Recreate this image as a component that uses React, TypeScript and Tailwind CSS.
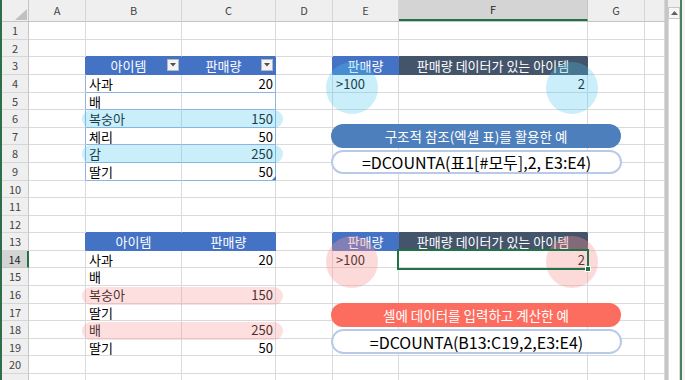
import React from "react";

type Kind = "l" | "r" | "hb" | "hs";
interface CellData {
  t: string;
  k: Kind;
  f?: boolean;
}

const COLS = [
  { k: "A", w: "w-[57px]" },
  { k: "B", w: "w-[96px]" },
  { k: "C", w: "w-[94px]" },
  { k: "D", w: "w-[57px]" },
  { k: "E", w: "w-[66px]" },
  { k: "F", w: "w-[189px]" },
  { k: "G", w: "w-[57px]" },
  { k: "H", w: "w-[20px]" },
];

// row heights for rows 1..21 (Excel rows are ~17.6px at this zoom)
const ROW_H = [
  "h-[18px]", "h-[17px]", "h-[18px]", "h-[18px]", "h-[17px]", "h-[18px]", "h-[17px]",
  "h-[18px]", "h-[18px]", "h-[17px]", "h-[18px]", "h-[17px]", "h-[18px]", "h-[17px]",
  "h-[18px]", "h-[18px]", "h-[17px]", "h-[18px]", "h-[17px]", "h-[18px]", "h-[17px]",
];

const DATA: Record<string, CellData> = {
  B3: { t: "아이템", k: "hb", f: true },
  C3: { t: "판매량", k: "hb", f: true },
  E3: { t: "판매량", k: "hb" },
  F3: { t: "판매량 데이터가 있는 아이템", k: "hs" },
  B4: { t: "사과", k: "l" },
  C4: { t: "20", k: "r" },
  E4: { t: ">100", k: "l" },
  F4: { t: "2", k: "r" },
  B5: { t: "배", k: "l" },
  B6: { t: "복숭아", k: "l" },
  C6: { t: "150", k: "r" },
  B7: { t: "체리", k: "l" },
  C7: { t: "50", k: "r" },
  B8: { t: "감", k: "l" },
  C8: { t: "250", k: "r" },
  B9: { t: "딸기", k: "l" },
  C9: { t: "50", k: "r" },
  B13: { t: "아이템", k: "hb" },
  C13: { t: "판매량", k: "hb" },
  E13: { t: "판매량", k: "hb" },
  F13: { t: "판매량 데이터가 있는 아이템", k: "hs" },
  B14: { t: "사과", k: "l" },
  C14: { t: "20", k: "r" },
  E14: { t: ">100", k: "l" },
  F14: { t: "2", k: "r" },
  B15: { t: "배", k: "l" },
  B16: { t: "복숭아", k: "l" },
  C16: { t: "150", k: "r" },
  B17: { t: "딸기", k: "l" },
  B18: { t: "배", k: "l" },
  C18: { t: "250", k: "r" },
  B19: { t: "딸기", k: "l" },
  C19: { t: "50", k: "r" },
};

const isHdrRow = (r: number) => r === 3 || r === 13;
const inTopTable = (r: number) => r >= 4 && r <= 9;

function rightColor(r: number, c: string) {
  const d = DATA[c + r];
  if (d?.k === "hb") return "border-r-[#4472c4]";
  if (d?.k === "hs") return "border-r-[#44546a]";
  if (isHdrRow(r) && (c === "A" || c === "D")) return "border-r-[#4472c4]";
  if (inTopTable(r) && (c === "A" || c === "C")) return "border-r-[#8eb4e3]";
  return "border-r-[#dadada]";
}

function bottomColor(r: number, c: string) {
  const d = DATA[c + r];
  if (d?.k === "hb") return "border-b-[#4472c4]";
  if (d?.k === "hs") return "border-b-[#44546a]";
  if ((r === 2 || r === 12) && (c === "B" || c === "C" || c === "E")) return "border-b-[#4472c4]";
  if ((r === 2 || r === 12) && c === "F") return "border-b-[#44546a]";
  if (inTopTable(r) && (c === "B" || c === "C")) return "border-b-[#8eb4e3]";
  return "border-b-[#dadada]";
}

function FilterBtn() {
  return (
    <span className="absolute right-[2px] top-[2px] w-[12px] h-[12px] bg-[#f4f4f4] border border-[#b8b8b8] flex items-center justify-center">
      <svg width="6" height="4" viewBox="0 0 6 4">
        <path d="M0 0 L6 0 L3 3.5 Z" fill="#505050" />
      </svg>
    </span>
  );
}

function Cell({ r, c, w }: { r: number; c: string; w: string }) {
  const d = DATA[c + r];
  let look = "bg-white text-black";
  let align = "justify-start pl-[3px]";
  if (d?.k === "hb") {
    look = "bg-[#4472c4] text-white";
    align = "justify-center";
  } else if (d?.k === "hs") {
    look = "bg-[#44546a] text-white";
    align = "justify-center";
  } else if (d?.k === "r") {
    align = "justify-end pr-[2px]";
  }
  return (
    <div
      className={`relative shrink-0 h-full ${w} border-r border-b ${rightColor(r, c)} ${bottomColor(r, c)} ${look} flex items-center ${align} text-[13px] leading-none whitespace-nowrap`}
    >
      {d && <span className={d.f ? "pr-[10px]" : ""}>{d.t}</span>}
      {d?.f && <FilterBtn />}
    </div>
  );
}

function ColHeader() {
  return (
    <div className="flex h-[22px] shrink-0 bg-[#efefef] border-b border-[#c4c4c4]">
      <div className="relative w-[27px] shrink-0 border-r border-[#c4c4c4]">
        <svg className="absolute left-[13px] top-[9px]" width="12" height="11" viewBox="0 0 12 11">
          <path d="M12 0 L12 11 L0 11 Z" fill="#c0c0c0" />
        </svg>
      </div>
      {COLS.map((col) => (
        <div
          key={col.k}
          className={`shrink-0 ${col.w} border-r flex items-center justify-center text-[11px] ${
            col.k === "F"
              ? "bg-[#d4d4d4] border-[#c4c4c4] border-b-2 border-b-[#217346] text-[#262626]"
              : "border-[#d6d6d6] text-[#444]"
          }`}
        >
          {col.k === "H" ? "" : col.k}
        </div>
      ))}
    </div>
  );
}

function Row({ r, h }: { r: number; h: string }) {
  const sel = r === 14;
  return (
    <div className={`flex shrink-0 ${h}`}>
      <div
        className={`w-[27px] shrink-0 flex items-center justify-center text-[11px] border-b ${
          sel
            ? "bg-[#d4d4d4] border-b-[#c4c4c4] border-r-2 border-r-[#217346] text-[#262626]"
            : "bg-[#efefef] border-b-[#d6d6d6] border-r border-r-[#c4c4c4] text-[#444]"
        }`}
      >
        {r <= 20 ? r : ""}
      </div>
      {COLS.map((col) => (
        <Cell key={col.k} r={r} c={col.k} w={col.w} />
      ))}
    </div>
  );
}

function Bubble({ cls }: { cls: string }) {
  return <div className={`absolute rounded-full pointer-events-none ${cls}`} />;
}

export default function App() {
  return (
    <div
      className="relative w-[685px] h-[380px] overflow-hidden bg-white flex border-l-2 border-[#2f6e4a]"
      style={{ fontFamily: '"Noto Sans CJK KR", "Noto Sans", sans-serif' }}
    >
      {/* sheet */}
      <div className="flex flex-col w-[663px] shrink-0 overflow-hidden">
        <ColHeader />
        {ROW_H.map((h, i) => (
          <Row key={i} r={i + 1} h={h} />
        ))}
      </div>

      {/* vertical scrollbar */}
      <div className="flex shrink-0 w-[20px] h-full">
        <div className="w-[3px] h-full bg-[#c6c6c6]" />
        <div className="w-[12px] h-full flex flex-col bg-white">
          <div className="h-[7px] bg-[#efefef]" />
          <div className="h-[12px] border border-[#c8c8c8] bg-[#f7f7f7] flex items-center justify-center">
            <svg width="7" height="4" viewBox="0 0 7 4">
              <path d="M0 4 L7 4 L3.5 0 Z" fill="#606060" />
            </svg>
          </div>
          <div className="flex-1 border-l border-r border-[#dcdcdc]" />
        </div>
        <div className="w-[2px] h-full bg-[#4d7f62]" />
        <div className="w-[3px] h-full bg-[#f3f3f3]" />
      </div>

      {/* highlights, top (cyan) */}
      <Bubble cls="left-[324px] top-[62px] w-[52px] h-[52px] bg-[rgba(80,200,240,0.3)]" />
      <Bubble cls="left-[544px] top-[62px] w-[52px] h-[52px] bg-[rgba(80,200,240,0.3)]" />
      <Bubble cls="left-[80px] top-[110px] w-[201px] h-[18px] bg-[rgba(80,200,240,0.3)]" />
      <Bubble cls="left-[80px] top-[145px] w-[201px] h-[18px] bg-[rgba(80,200,240,0.3)]" />

      {/* highlights, bottom (pink) */}
      <Bubble cls="left-[324px] top-[236px] w-[52px] h-[52px] bg-[rgba(248,150,150,0.35)]" />
      <Bubble cls="left-[544px] top-[236px] w-[52px] h-[52px] bg-[rgba(248,150,150,0.35)]" />
      <Bubble cls="left-[80px] top-[287px] w-[201px] h-[18px] bg-[rgba(248,150,150,0.3)]" />
      <Bubble cls="left-[80px] top-[322px] w-[201px] h-[18px] bg-[rgba(248,150,150,0.3)]" />

      {/* table resize handle */}
      <svg className="absolute left-[270px] top-[176px]" width="4" height="4" viewBox="0 0 4 4">
        <path d="M4 0 L4 4 L0 4 Z" fill="#4472c4" />
      </svg>

      {/* active cell F14 */}
      <div className="absolute left-[395px] top-[249px] w-[192px] h-[21px] border-2 border-[#217346] pointer-events-none" />
      <div className="absolute left-[583px] top-[266px] w-[6px] h-[6px] bg-[#217346] border border-white" />

      {/* labels */}
      <div className="absolute left-[329px] top-[124px] w-[290px] h-[24px] rounded-full bg-[#4e7fbd] text-white text-[13.5px] flex items-center justify-center">
        구조적 참조(엑셀 표)를 활용한 예
      </div>
      <div className="absolute left-[329px] top-[150px] w-[291px] h-[24px] rounded-full bg-white border-2 border-[#b8cae8] text-black text-[16px] flex items-center justify-center">
        =DCOUNTA(표1[#모두],2, E3:E4)
      </div>
      <div className="absolute left-[329px] top-[303px] w-[290px] h-[24px] rounded-full bg-[#fd6d5f] text-white text-[13.5px] flex items-center justify-center">
        셀에 데이터를 입력하고 계산한 예
      </div>
      <div className="absolute left-[329px] top-[329px] w-[291px] h-[25px] rounded-full bg-white border-2 border-[#b8cae8] text-black text-[16px] flex items-center justify-center">
        =DCOUNTA(B13:C19,2,E3:E4)
      </div>
    </div>
  );
}
